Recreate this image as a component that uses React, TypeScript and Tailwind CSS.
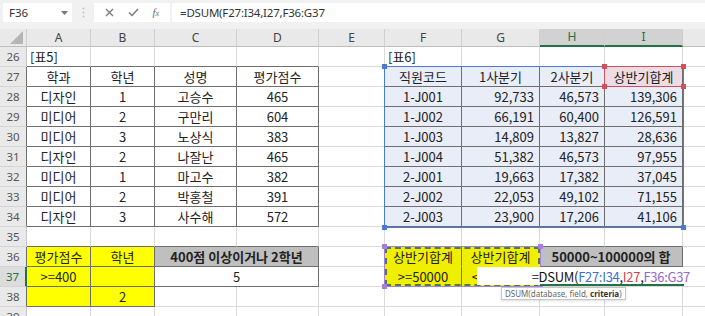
import { ReactNode } from 'react';

const W = {
  A: 'w-[64px]',
  B: 'w-[64px]',
  C: 'w-[82px]',
  D: 'w-[82px]',
  E: 'w-[66px]',
  F: 'w-[77px]',
  G: 'w-[78px]',
  H: 'w-[65px]',
  I: 'w-[78px]',
};

const table5 = [
  ['디자인', '1', '고승수', '465'],
  ['미디어', '2', '구만리', '604'],
  ['미디어', '3', '노상식', '383'],
  ['디자인', '2', '나잘난', '465'],
  ['미디어', '1', '마고수', '382'],
  ['미디어', '2', '박홍철', '391'],
  ['디자인', '3', '사수해', '572'],
];

const table6 = [
  ['1-J001', '92,733', '46,573', '139,306'],
  ['1-J002', '66,191', '60,400', '126,591'],
  ['1-J003', '14,809', '13,827', '28,636'],
  ['1-J004', '51,382', '46,573', '97,955'],
  ['2-J001', '19,663', '17,382', '37,045'],
  ['2-J002', '22,053', '49,102', '71,155'],
  ['2-J003', '23,900', '17,206', '41,106'],
];

type CellProps = {
  w: string;
  r?: boolean;
  b?: boolean;
  bg?: string;
  al?: 'l' | 'c' | 'r';
  bold?: boolean;
  extra?: string;
  children?: ReactNode;
};

function Cell({ w, r, b, bg = 'bg-white', al = 'c', bold, extra = '', children }: CellProps) {
  const align = al === 'l' ? 'justify-start pl-[3px]' : al === 'r' ? 'justify-end pr-[5px]' : 'justify-center';
  return (
    <div
      className={`${w} h-full shrink-0 flex items-center whitespace-nowrap border-r border-b ${
        r ? 'border-r-[#6e6e6e]' : 'border-r-[#dadada]'
      } ${b ? 'border-b-[#6e6e6e]' : 'border-b-[#dadada]'} ${bg} ${align} ${bold ? 'font-bold text-[13px]' : ''} ${extra}`}
    >
      {children}
    </div>
  );
}

function Row({ n, dark, active, children }: { n: number; dark?: boolean; active?: boolean; children?: ReactNode }) {
  return (
    <div className="flex h-5">
      <div
        className={`w-[27px] h-full shrink-0 flex items-center justify-center border-b border-b-[#d4d4d4] font-['Noto_Sans',sans-serif] text-[11.5px] ${
          active
            ? 'bg-[#dcdcdc] text-[#217346] border-r-2 border-r-[#217346]'
            : dark
            ? 'bg-[#e9e9e9] text-[#555] border-r border-r-[#6e6e6e]'
            : 'bg-[#e9e9e9] text-[#555] border-r border-r-[#c6c6c6]'
        }`}
      >
        {n}
      </div>
      {children}
      <div className="flex-1 h-full border-b border-b-[#dadada]" />
    </div>
  );
}

function ColHead({ w, label, sel }: { w: string; label: string; sel?: boolean }) {
  return (
    <div
      className={`${w} h-full shrink-0 flex items-center justify-center border-r border-r-[#cfcfcf] ${
        sel ? 'bg-[#d2d2d2] text-[#217346] border-b-2 border-b-[#217346]' : 'bg-[#e9e9e9] text-[#444] border-b border-b-[#bdbdbd]'
      }`}
    >
      {label}
    </div>
  );
}

function Handle({ pos, color }: { pos: string; color: string }) {
  return <div className={`absolute w-[5px] h-[5px] ${pos} ${color}`} />;
}

export default function App() {
  return (
    <div className="w-[705px] h-[316px] overflow-hidden relative bg-white text-[#222] text-[13px] leading-none font-['Noto_Sans_CJK_KR','Noto_Sans',sans-serif]">
      {/* formula bar */}
      <div className="h-[29px] bg-[#f1f1f1] flex items-start pt-[3px] pl-[3px] font-['Noto_Sans',sans-serif]">
        <div className="w-[69px] h-[19px] bg-white flex items-center justify-between pl-[6px] pr-[4px] text-[11.5px] text-[#333]">
          <span>F36</span>
          <svg width="7" height="4" viewBox="0 0 7 4">
            <path d="M0 0h7L3.5 4z" fill="#777" />
          </svg>
        </div>
        <div className="w-[22px] h-[19px] flex items-center justify-center">
          <svg width="3" height="11" viewBox="0 0 3 11">
            <circle cx="1.5" cy="1.5" r="1" fill="#c4c4c4" />
            <circle cx="1.5" cy="5.5" r="1" fill="#c4c4c4" />
            <circle cx="1.5" cy="9.5" r="1" fill="#c4c4c4" />
          </svg>
        </div>
        <div className="w-[76px] h-[19px] bg-white flex items-center justify-around px-[4px] text-[#6b6b6b]">
          <svg width="9" height="9" viewBox="0 0 9 9">
            <path d="M1 1l7 7M8 1L1 8" stroke="#7a7a7a" strokeWidth="1.3" />
          </svg>
          <svg width="11" height="9" viewBox="0 0 11 9">
            <path d="M1 4.5l3 3L10 1" stroke="#7a7a7a" strokeWidth="1.5" fill="none" />
          </svg>
          <span className="italic text-[11px] font-['Liberation_Serif',serif] text-[#6b6b6b]">
            f<span className="text-[8px]">x</span>
          </span>
        </div>
        <div className="w-[2px]" />
        <div className="flex-1 h-[19px] bg-white flex items-center pl-[8px] text-[11.5px] text-[#333] tracking-[-0.2px]">
          =DSUM(F27:I34,I27,F36:G37
        </div>
      </div>

      {/* column headers */}
      <div className="flex h-[18px] font-['Noto_Sans',sans-serif] text-[12px]">
        <div className="w-[27px] h-full shrink-0 bg-[#e9e9e9] border-r border-r-[#cfcfcf] border-b border-b-[#bdbdbd] relative">
          <svg className="absolute right-[3px] bottom-[2px]" width="13" height="13" viewBox="0 0 13 13">
            <path d="M13 0V13H0z" fill="#b5b5b5" />
          </svg>
        </div>
        <ColHead w={W.A} label="A" />
        <ColHead w={W.B} label="B" />
        <ColHead w={W.C} label="C" />
        <ColHead w={W.D} label="D" />
        <ColHead w={W.E} label="E" />
        <ColHead w={W.F} label="F" />
        <ColHead w={W.G} label="G" />
        <ColHead w={W.H} label="H" sel />
        <ColHead w={W.I} label="I" sel />
        <div className="flex-1 h-full bg-[#e9e9e9] border-b border-b-[#bdbdbd]" />
      </div>

      {/* row 26 */}
      <Row n={26}>
        <Cell w={W.A} b al="l">[표5]</Cell>
        <Cell w={W.B} b />
        <Cell w={W.C} b />
        <Cell w={W.D} b />
        <Cell w={W.E} />
        <Cell w={W.F} al="l">[표6]</Cell>
        <Cell w={W.G} />
        <Cell w={W.H} />
        <Cell w={W.I} />
      </Row>

      {/* row 27 headers */}
      <Row n={27} dark>
        <Cell w={W.A} r b>학과</Cell>
        <Cell w={W.B} r b>학년</Cell>
        <Cell w={W.C} r b>성명</Cell>
        <Cell w={W.D} r b>평가점수</Cell>
        <Cell w={W.E} />
        <Cell w={W.F} r b bg="bg-[#e8edf7]">직원코드</Cell>
        <Cell w={W.G} r b bg="bg-[#e8edf7]">1사분기</Cell>
        <Cell w={W.H} r b bg="bg-[#e8edf7]">2사분기</Cell>
        <Cell w={W.I} r b bg="bg-[#ecdde5]">상반기합계</Cell>
      </Row>

      {table5.map((t, i) => {
        const s = table6[i];
        return (
          <Row key={i} n={28 + i} dark>
            <Cell w={W.A} r b>{t[0]}</Cell>
            <Cell w={W.B} r b>{t[1]}</Cell>
            <Cell w={W.C} r b>{t[2]}</Cell>
            <Cell w={W.D} r b>{t[3]}</Cell>
            <Cell w={W.E} />
            <Cell w={W.F} r b bg="bg-[#e8edf7]">{s[0]}</Cell>
            <Cell w={W.G} r b bg="bg-[#e8edf7]" al="r">{s[1]}</Cell>
            <Cell w={W.H} r b bg="bg-[#e8edf7]" al="r">{s[2]}</Cell>
            <Cell w={W.I} r b bg="bg-[#e8edf7]" al="r">{s[3]}</Cell>
          </Row>
        );
      })}

      {/* row 35 */}
      <Row n={35}>
        <Cell w={W.A} b />
        <Cell w={W.B} b />
        <Cell w={W.C} b />
        <Cell w={W.D} b />
        <Cell w={W.E} />
        <Cell w={W.F} />
        <Cell w={W.G} />
        <Cell w={W.H} b />
        <Cell w={W.I} b />
      </Row>

      {/* row 36 */}
      <Row n={36} dark>
        <Cell w={W.A} r b bg="bg-[#ffff00]">평가점수</Cell>
        <Cell w={W.B} r b bg="bg-[#ffff00]">학년</Cell>
        <Cell w="w-[164px]" r b bg="bg-[#bfbfbf]" bold>400점 이상이거나 2학년</Cell>
        <Cell w={W.E} />
        <Cell w={W.F} r bg="bg-[#f0ef00]" extra="border-b-[#f0ef00]">상반기합계</Cell>
        <Cell w={W.G} bg="bg-[#f0ef00]" extra="border-b-[#f0ef00]">상반기합계</Cell>
        <Cell w="w-[143px]" r b bg="bg-[#bfbfbf]" bold>50000~100000의 합</Cell>
      </Row>

      {/* row 37 */}
      <Row n={37} active>
        <Cell w={W.A} r b bg="bg-[#ffff00]">&gt;=400</Cell>
        <Cell w={W.B} r b bg="bg-[#ffff00]" />
        <Cell w="w-[164px]" r b>5</Cell>
        <Cell w={W.E} />
        <Cell w={W.F} r bg="bg-[#f0ef00]">&gt;=50000</Cell>
        <Cell w={W.G} bg="bg-[#f0ef00]">&lt;=100000</Cell>
        <Cell w={W.H} />
        <Cell w={W.I} />
      </Row>

      {/* row 38 */}
      <Row n={38} dark>
        <Cell w={W.A} r b bg="bg-[#ffff00]" />
        <Cell w={W.B} r b bg="bg-[#ffff00]">2</Cell>
        <Cell w={W.C} />
        <Cell w={W.D} />
        <Cell w={W.E} />
        <Cell w={W.F} />
        <Cell w={W.G} />
        <Cell w={W.H} />
        <Cell w={W.I} />
      </Row>

      <Row n={39}>
        <Cell w={W.A} />
        <Cell w={W.B} />
        <Cell w={W.C} />
        <Cell w={W.D} />
        <Cell w={W.E} />
        <Cell w={W.F} />
        <Cell w={W.G} />
        <Cell w={W.H} />
        <Cell w={W.I} />
      </Row>

      {/* reference highlight F27:I34 */}
      <div className="absolute left-[384px] top-[66px] w-[300px] h-[162px] border-[1.5px] border-[#4a7bd3] pointer-events-none">
        <Handle pos="-left-[3px] -top-[3px]" color="bg-[#4a7bd3]" />
        <Handle pos="-right-[3px] -top-[3px]" color="bg-[#4a7bd3]" />
        <Handle pos="-left-[3px] -bottom-[3px]" color="bg-[#4a7bd3]" />
        <Handle pos="-right-[3px] -bottom-[3px]" color="bg-[#4a7bd3]" />
      </div>

      {/* reference highlight I27 */}
      <div className="absolute left-[604px] top-[66px] w-[80px] h-[21px] border-[1.5px] border-[#d2505c] pointer-events-none">
        <Handle pos="-left-[3px] -top-[3px]" color="bg-[#d2505c]" />
        <Handle pos="-right-[3px] -top-[3px]" color="bg-[#d2505c]" />
        <Handle pos="-left-[3px] -bottom-[3px]" color="bg-[#d2505c]" />
        <Handle pos="-right-[3px] -bottom-[3px]" color="bg-[#d2505c]" />
      </div>

      {/* copy marquee + reference F36:G37 */}
      <div className="absolute left-[384px] top-[246px] w-[157px] h-[41px] border border-[#a47fe0] pointer-events-none">
        <div className="absolute inset-0 border-2 border-dashed border-[#4f7a52]" />
        <Handle pos="-left-[3px] -top-[3px]" color="bg-[#a47fe0]" />
        <Handle pos="-right-[3px] -top-[3px]" color="bg-[#a47fe0]" />
        <Handle pos="-left-[3px] -bottom-[3px]" color="bg-[#a47fe0]" />
        <Handle pos="-right-[3px] -bottom-[3px]" color="bg-[#a47fe0]" />
      </div>

      {/* in-cell editor H37:I37 */}
      <div className="absolute left-[477px] top-[267px] w-[228px] h-[18px] bg-white flex items-center justify-end pr-[15px] text-[13px] tracking-[-0.3px] text-[#111]">
        <span>=DSUM(</span>
        <span className="text-[#3c6fd4]">F27:I34</span>
        <span>,</span>
        <span className="text-[#d6404c]">I27</span>
        <span>,</span>
        <span className="text-[#9366d6]">F36:G37</span>
      </div>
      <div className="absolute left-[540px] top-[284px] w-[144px] h-[2px] bg-[#217346]" />

      {/* function tooltip */}
      <div className="absolute left-[501px] top-[287px] h-[13px] bg-white border border-[#c6c6c6] shadow-sm px-[3px] text-[8px] leading-[11px] whitespace-nowrap text-[#666] font-['Noto_Sans',sans-serif]">
        DSUM(database, field, <b className="text-[#333]">criteria</b>)
      </div>
    </div>
  );
}
